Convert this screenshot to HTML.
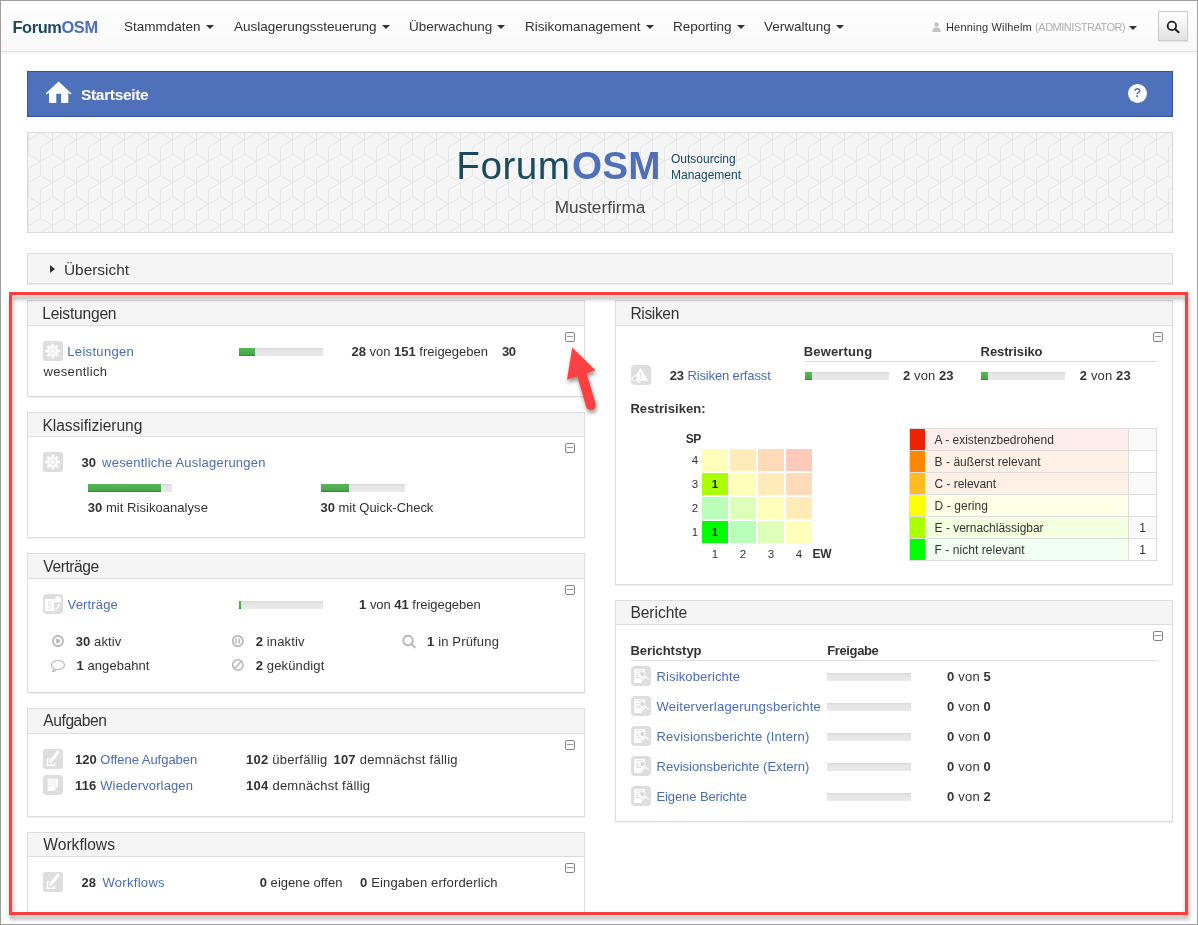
<!DOCTYPE html>
<html lang="de">
<head>
<meta charset="utf-8">
<title>ForumOSM - Startseite</title>
<style>
*{box-sizing:border-box;margin:0;padding:0}
html,body{width:1198px;height:925px;overflow:hidden;background:#fff}
#root{position:absolute;left:0;top:0;width:1198px;height:925px;will-change:transform}
body{position:relative;font-family:"Liberation Sans",sans-serif;font-size:13px;color:#333;line-height:1}
.abs,.t,.a,.h{position:absolute;white-space:nowrap}
.t{font-size:13px;line-height:16px;color:#333}
.a{font-size:13px;line-height:16px;color:#4a6cb8}
.h{font-size:15.6px;line-height:20px;color:#333}
.b,b{font-weight:bold}
.lnk{color:#4a6cb8}
#frame0{position:absolute;left:0;top:0;width:1198px;height:925px;border:1px solid #9f9f9f;z-index:50}
#nav{position:absolute;left:1px;top:1px;width:1196px;height:51px;background:linear-gradient(#fff,#f8f8f8);border-bottom:1px solid #e2e2e2;box-shadow:0 1px 5px rgba(0,0,0,.085)}
.nv{position:absolute;top:17.5px;font-size:13.5px;line-height:16px;color:#333;white-space:nowrap}
.caret{display:inline-block;width:0;height:0;border-left:4px solid transparent;border-right:4px solid transparent;border-top:4px solid #333;vertical-align:middle;margin-left:5px}
#hdr{position:absolute;left:27px;top:71px;width:1146px;height:46px;background:#4f70ba;border:1px solid #34519b}
#banner{position:absolute;left:27px;top:132px;width:1146px;height:101px;background:#f5f5f5;border:1px solid #dcdcdc;overflow:hidden}
#ueb{position:absolute;left:27px;top:253px;width:1146px;height:31px;background:#f5f5f5;border:1px solid #ddd;box-shadow:0 1px 1px rgba(0,0,0,.08)}
.panel{position:absolute;background:#fff;border:1px solid #ddd;box-shadow:0 1px 1px rgba(0,0,0,.06)}
.ph{position:absolute;background:#f5f5f5;border-bottom:1px solid #ddd}
.bar{position:absolute;height:8px;background:linear-gradient(#d8d8d8 0,#e5e5e5 2px,#e9e9e9 100%)}
.bar i{position:absolute;left:0;top:0;bottom:0;background:linear-gradient(#5bb75b 0,#47a447 85%,#2f8c2f 88%,#2f8c2f 100%);display:block}
.ico{position:absolute;width:20px;height:20px;border-radius:3.5px;background:#dedede;overflow:hidden}
.ico svg{position:absolute;left:0;top:0}
.mn{position:absolute;width:10px;height:10px;border:1px solid #858585;border-radius:2px;background:#fff}
.mn:after{content:"";position:absolute;left:1px;right:1px;top:3px;height:1.2px;background:#999}
.cell{position:absolute;width:26px;height:22px;font-size:11.5px;font-weight:bold;line-height:22px;text-align:center;color:#222}
.lg{position:absolute;font-size:12px;line-height:21px;color:#333;white-space:nowrap}
.hr{position:absolute;height:1px;background:#ddd}
</style>
</head>
<body>
<div id="root">
<div id="nav">
<div class="abs" style="left:11.4px;top:16px;font-size:16.4px;line-height:20px;font-weight:bold;color:#1b4a5c;letter-spacing:-0.38px">Forum<span style="color:#4f6fba">OSM</span></div>
<div class="nv" style="left:123px">Stammdaten<span class="caret"></span></div>
<div class="nv" style="left:233px">Auslagerungssteuerung<span class="caret"></span></div>
<div class="nv" style="left:408px">Überwachung<span class="caret"></span></div>
<div class="nv" style="left:524px">Risikomanagement<span class="caret"></span></div>
<div class="nv" style="left:672px">Reporting<span class="caret"></span></div>
<div class="nv" style="left:763px">Verwaltung<span class="caret"></span></div>
<svg class="abs" style="left:931px;top:21px" width="9" height="10" viewBox="0 0 9 10"><circle cx="4.5" cy="2.6" r="2.3" fill="#c4c4c4"/><path d="M0.3 10 C0.3 6.5 2 5.4 4.5 5.4 C7 5.4 8.7 6.5 8.7 10 Z" fill="#c4c4c4"/></svg>
<div class="abs" style="left:945px;top:18px;font-size:11px;line-height:16px;color:#333;letter-spacing:0.18px">Henning Wilhelm <span style="color:#b0b0b0;letter-spacing:-0.48px">(ADMINISTRATOR)</span><span class="caret" style="margin-left:4px"></span></div>
<div class="abs" style="left:1157px;top:10px;width:30px;height:30px;border:1px solid #ccc;background:linear-gradient(#fff,#e2e2e2);box-shadow:0 1px 1px rgba(0,0,0,.08)"><svg style="position:absolute;left:7px;top:8px" width="14" height="14" viewBox="0 0 14 14"><circle cx="5.9" cy="5.9" r="4.2" fill="none" stroke="#222" stroke-width="1.8"/><path d="M9 9 L12.6 12.2" stroke="#222" stroke-width="2" stroke-linecap="round"/></svg></div>
</div>
<div id="hdr">
<svg class="abs" style="left:17px;top:9px" width="28" height="23" viewBox="45 81 28 23"><path d="M58.6 81.5 L45.6 93.6 L46.6 94.6 L49 92.6 V103.1 H56.3 V93.8 H61.1 V103.1 H68.3 V92.6 L70.6 94.6 L71.6 93.6 Z" fill="#fff"/></svg>
<div class="abs" style="left:53px;top:14px;font-size:15.5px;line-height:18px;font-weight:bold;color:#fff;letter-spacing:-0.33px">Startseite</div>
<div class="abs" style="left:1100px;top:12px;width:19px;height:19px;border-radius:9.5px;background:#fff;color:#4f70ba;font-size:12px;font-weight:bold;line-height:19px;text-align:center">?</div>
</div>
<div id="banner">
<svg class="abs" style="left:0;top:0" width="1146" height="101"><defs><pattern id="cub" width="24" height="171" patternUnits="userSpaceOnUse" x="12" y="-36"><path d="M12.50 -42.50 L0.50 -49.50 M12.50 -42.50 L24.50 -49.50 M12.50 -56.50 L12.50 -28.10 M12.50 -42.50 L0.50 -35.50 M0.50 -21.12 L-11.50 -28.12 M0.50 -21.12 L12.50 -28.12 M0.50 -35.12 L0.50 -6.72 M0.50 -21.12 L-11.50 -14.12 M24.50 -21.12 L12.50 -28.12 M24.50 -21.12 L36.50 -28.12 M24.50 -35.12 L24.50 -6.72 M24.50 -21.12 L12.50 -14.12 M12.50 0.25 L0.50 -6.75 M12.50 0.25 L24.50 -6.75 M12.50 -13.75 L12.50 14.65 M12.50 0.25 L0.50 7.25 M0.50 21.62 L-11.50 14.62 M0.50 21.62 L12.50 14.62 M0.50 7.62 L0.50 36.02 M0.50 21.62 L-11.50 28.62 M24.50 21.62 L12.50 14.62 M24.50 21.62 L36.50 14.62 M24.50 7.62 L24.50 36.02 M24.50 21.62 L12.50 28.62 M12.50 43.00 L0.50 36.00 M12.50 43.00 L24.50 36.00 M12.50 29.00 L12.50 57.40 M12.50 43.00 L0.50 50.00 M0.50 64.38 L-11.50 57.38 M0.50 64.38 L12.50 57.38 M0.50 50.38 L0.50 78.78 M0.50 64.38 L-11.50 71.38 M24.50 64.38 L12.50 57.38 M24.50 64.38 L36.50 57.38 M24.50 50.38 L24.50 78.78 M24.50 64.38 L12.50 71.38 M12.50 85.75 L0.50 78.75 M12.50 85.75 L24.50 78.75 M12.50 71.75 L12.50 100.15 M12.50 85.75 L0.50 92.75 M0.50 107.12 L-11.50 100.12 M0.50 107.12 L12.50 100.12 M0.50 93.12 L0.50 121.53 M0.50 107.12 L-11.50 114.12 M24.50 107.12 L12.50 100.12 M24.50 107.12 L36.50 100.12 M24.50 93.12 L24.50 121.53 M24.50 107.12 L12.50 114.12 M12.50 128.50 L0.50 121.50 M12.50 128.50 L24.50 121.50 M12.50 114.50 L12.50 142.90 M12.50 128.50 L0.50 135.50 M0.50 149.88 L-11.50 142.88 M0.50 149.88 L12.50 142.88 M0.50 135.88 L0.50 164.28 M0.50 149.88 L-11.50 156.88 M24.50 149.88 L12.50 142.88 M24.50 149.88 L36.50 142.88 M24.50 135.88 L24.50 164.28 M24.50 149.88 L12.50 156.88 M12.50 171.25 L0.50 164.25 M12.50 171.25 L24.50 164.25 M12.50 157.25 L12.50 185.65 M12.50 171.25 L0.50 178.25 M0.50 192.62 L-11.50 185.62 M0.50 192.62 L12.50 185.62 M0.50 178.62 L0.50 207.03 M0.50 192.62 L-11.50 199.62 M24.50 192.62 L12.50 185.62 M24.50 192.62 L36.50 185.62 M24.50 178.62 L24.50 207.03 M24.50 192.62 L12.50 199.62 M12.50 214.00 L0.50 207.00 M12.50 214.00 L24.50 207.00 M12.50 200.00 L12.50 228.40 M12.50 214.00 L0.50 221.00 M0.50 235.38 L-11.50 228.38 M0.50 235.38 L12.50 228.38 M0.50 221.38 L0.50 249.78 M0.50 235.38 L-11.50 242.38 M24.50 235.38 L12.50 228.38 M24.50 235.38 L36.50 228.38 M24.50 221.38 L24.50 249.78 M24.50 235.38 L12.50 242.38" fill="none" stroke="#e4e6e8" stroke-width="1"/></pattern></defs><rect width="1146" height="101" fill="url(#cub)"/></svg>
<div id="logo" class="abs" style="left:428.3px;top:8.3px;font-size:38.7px;line-height:50px;color:#1b4a5c;letter-spacing:0.5px">Forum<b id="osm" style="color:#4f6fba;letter-spacing:0.2px;margin-left:1.4px">OSM</b></div>
<div class="abs" style="left:643px;top:19px;font-size:12px;line-height:15.5px;color:#1b4a5c">Outsourcing<br>Management</div>
<div class="abs" style="left:0;width:1144px;top:64.4px;text-align:center;font-size:17.2px;line-height:20px;color:#444">Musterfirma</div>
</div>
<div id="ueb">
<div class="abs" style="left:22px;top:11px;width:0;height:0;border-top:4.5px solid transparent;border-bottom:4.5px solid transparent;border-left:5.5px solid #333"></div>
<div class="abs" style="left:36px;top:7px;font-size:15.4px;line-height:18px;color:#333">Übersicht</div>
</div>
<div class="panel" style="left:27px;top:300px;width:558px;height:97px;"></div>
<div class="ph" style="left:28px;top:301px;width:556px;height:25px"></div>
<div id="x1" class="h" style="left:42.2px;top:304px;letter-spacing:-0.22px">Leistungen</div>
<div class="mn" style="left:565px;top:332px"></div>
<div class="ico" style="left:43px;top:341px;border-radius:2.5px"><svg width="20" height="20" viewBox="0 0 20 20"><path d="M8.46 4.85 L8.43 2.71 L10.97 2.71 L10.94 4.85 L12.47 5.48 L13.96 3.95 L15.75 5.74 L14.22 7.23 L14.85 8.76 L16.99 8.73 L16.99 11.27 L14.85 11.24 L14.22 12.77 L15.75 14.26 L13.96 16.05 L12.47 14.52 L10.94 15.15 L10.97 17.29 L8.43 17.29 L8.46 15.15 L6.93 14.52 L5.44 16.05 L3.65 14.26 L5.18 12.77 L4.55 11.24 L2.41 11.27 L2.41 8.73 L4.55 8.76 L5.18 7.23 L3.65 5.74 L5.44 3.95 L6.93 5.48 Z" fill="#fff"/><circle cx="9.7" cy="10" r="2.7" fill="#fff" stroke="#dcdcdc" stroke-width="0.9"/></svg></div>
<div id="x2" class="a" style="left:67.3px;top:344px;letter-spacing:0.32px;">Leistungen</div>
<div id="x3" class="t" style="left:43.5px;top:364px;letter-spacing:0.32px;">wesentlich</div>
<div class="bar" style="left:239px;top:348px;width:84px"><i style="width:16px"></i></div>
<div id="x4" class="t" style="left:351.5px;top:344px;letter-spacing:-0.01px;"><b>28</b> von <b>151</b> freigegeben</div>
<div id="x5" class="t" style="left:502.1px;top:344px;letter-spacing:-0.45px;"><b>30</b></div>
<div class="panel" style="left:27px;top:412px;width:558px;height:126px;"></div>
<div class="ph" style="left:28px;top:413px;width:556px;height:24px"></div>
<div id="x6" class="h" style="left:42.4px;top:416px;letter-spacing:-0.04px">Klassifizierung</div>
<div class="mn" style="left:565px;top:443px"></div>
<div class="ico" style="left:43px;top:452px;border-radius:2.5px"><svg width="20" height="20" viewBox="0 0 20 20"><path d="M8.46 4.85 L8.43 2.71 L10.97 2.71 L10.94 4.85 L12.47 5.48 L13.96 3.95 L15.75 5.74 L14.22 7.23 L14.85 8.76 L16.99 8.73 L16.99 11.27 L14.85 11.24 L14.22 12.77 L15.75 14.26 L13.96 16.05 L12.47 14.52 L10.94 15.15 L10.97 17.29 L8.43 17.29 L8.46 15.15 L6.93 14.52 L5.44 16.05 L3.65 14.26 L5.18 12.77 L4.55 11.24 L2.41 11.27 L2.41 8.73 L4.55 8.76 L5.18 7.23 L3.65 5.74 L5.44 3.95 L6.93 5.48 Z" fill="#fff"/><circle cx="9.7" cy="10" r="2.7" fill="#fff" stroke="#dcdcdc" stroke-width="0.9"/></svg></div>
<div id="x7" class="t" style="left:81.6px;top:455px;letter-spacing:-0.09px;"><b>30</b></div>
<div id="x8" class="a" style="left:102.1px;top:455px;letter-spacing:0.21px;">wesentliche Auslagerungen</div>
<div class="bar" style="left:88px;top:484px;width:84px"><i style="width:73px"></i></div>
<div id="x9" class="t" style="left:87.7px;top:500px;letter-spacing:0.05px;"><b>30</b> mit Risikoanalyse</div>
<div class="bar" style="left:321px;top:484px;width:84px"><i style="width:28px"></i></div>
<div id="x10" class="t" style="left:320.6px;top:500px;letter-spacing:-0.04px;"><b>30</b> mit Quick-Check</div>
<div class="panel" style="left:27px;top:553px;width:558px;height:140px;"></div>
<div class="ph" style="left:28px;top:554px;width:556px;height:25px"></div>
<div id="x11" class="h" style="left:43.3px;top:557px;letter-spacing:-0.44px">Verträge</div>
<div class="mn" style="left:565px;top:585px"></div>
<div class="ico" style="left:43px;top:594px;border-radius:4px"><svg width="20" height="20" viewBox="0 0 20 20"><rect x="1.9" y="5" width="9.3" height="12" fill="#fff"/><text x="3.9" y="13.8" font-family="Liberation Sans, sans-serif" font-size="9" fill="#dcdcdc">§</text><path d="M11.7 8.3 V4.6 L14.9 1.8 L18 4.6 V8.3 Z" fill="#fff"/><path d="M12.6 15.6 C15 14.6 15.6 12.6 15.7 10.8" fill="none" stroke="#fff" stroke-width="1.3"/><path d="M14 11.4 L15.9 9.6 L17.3 11.9 Z" fill="#fff"/></svg></div>
<div id="x12" class="a" style="left:67.6px;top:597px;letter-spacing:0.15px;">Verträge</div>
<div class="bar" style="left:239px;top:601px;width:84px"><i style="width:2px"></i></div>
<div id="x13" class="t" style="left:359.1px;top:597px;letter-spacing:-0.03px;"><b>1</b> von <b>41</b> freigegeben</div>
<svg class="abs" style="left:52px;top:636px;overflow:visible" width="14" height="13" viewBox="0 0 14 13"><circle cx="6" cy="5" r="5.1" fill="none" stroke="#b6b6b6" stroke-width="1.7"/><path d="M4.3 2.1 L8.9 5 L4.3 7.9 Z" fill="#b6b6b6"/></svg>
<div id="x14" class="t" style="left:75.8px;top:634px;letter-spacing:0.08px;"><b>30</b> aktiv</div>
<svg class="abs" style="left:232px;top:636px;overflow:visible" width="14" height="13" viewBox="0 0 14 13"><circle cx="5.8" cy="5" r="5.1" fill="none" stroke="#b6b6b6" stroke-width="1.7"/><path d="M4.15 2.5 V7.5 M7.2 2.5 V7.5" stroke="#b6b6b6" stroke-width="1.4"/></svg>
<div id="x15" class="t" style="left:255.7px;top:634px;letter-spacing:0.13px;"><b>2</b> inaktiv</div>
<svg class="abs" style="left:403px;top:636px;overflow:visible" width="14" height="13" viewBox="0 0 14 13"><circle cx="5" cy="4.5" r="4.7" fill="none" stroke="#b6b6b6" stroke-width="1.9"/><path d="M8.6 8.1 L11.8 11.2" stroke="#b6b6b6" stroke-width="2" stroke-linecap="round"/></svg>
<div id="x16" class="t" style="left:427.0px;top:634px;letter-spacing:0.16px;"><b>1</b> in Prüfung</div>
<svg class="abs" style="left:51px;top:660px;overflow:visible" width="14" height="13" viewBox="0 0 14 13"><ellipse cx="7" cy="5" rx="6.5" ry="4.5" fill="none" stroke="#b6b6b6" stroke-width="1.1"/><path d="M3.3 8.8 C3.2 10.2 2.4 11 1.2 11.6 C3.2 11.5 4.6 10.7 5.4 9.4" fill="#fff" stroke="#b6b6b6" stroke-width="1.1"/></svg>
<div id="x17" class="t" style="left:76.6px;top:658px;letter-spacing:0.05px;"><b>1</b> angebahnt</div>
<svg class="abs" style="left:232px;top:660px;overflow:visible" width="14" height="13" viewBox="0 0 14 13"><circle cx="5.8" cy="5" r="5.2" fill="none" stroke="#b6b6b6" stroke-width="1.5"/><path d="M2.2 8.7 L9.4 1.3" stroke="#b6b6b6" stroke-width="1.5"/></svg>
<div id="x18" class="t" style="left:255.7px;top:658px;letter-spacing:0.14px;"><b>2</b> gekündigt</div>
<div class="panel" style="left:27px;top:708px;width:558px;height:109px;"></div>
<div class="ph" style="left:28px;top:709px;width:556px;height:25px"></div>
<div id="x19" class="h" style="left:43.3px;top:711px;letter-spacing:-0.44px">Aufgaben</div>
<div class="mn" style="left:565px;top:740px"></div>
<div class="ico" style="left:43px;top:749px;border-radius:2.5px"><svg width="20" height="20" viewBox="0 0 20 20"><path d="M14.5 1.2 L17 3.2 L9.3 13 L6.5 14.2 L6.8 11 Z" fill="#fff"/><path d="M6.2 9.6 H4.5 V16.3 H11.5 V14" fill="none" stroke="#fff" stroke-width="1.4"/></svg></div>
<div class="ico" style="left:43px;top:775px;border-radius:4px"><svg width="20" height="20" viewBox="0 0 20 20"><path d="M4.7 3.8 H15 V12 L11.2 15.9 H4.7 Z" fill="#fff"/><path d="M11.4 15.7 V12.2 H14.8 Z" fill="#f4f4f4" stroke="#e4e4e4" stroke-width="0.5"/><path d="M6.2 5.4 H13 M6.2 7.8 H13 M6.2 10.3 H13" stroke="#e6e8ee" stroke-width="0.9"/></svg></div>
<div id="x20" class="t" style="left:75.1px;top:752px;letter-spacing:-0.03px;"><b>120</b> <span class="lnk">Offene Aufgaben</span></div>
<div id="x21" class="t" style="left:75.1px;top:778px;letter-spacing:0.13px;"><b>116</b> <span class="lnk">Wiedervorlagen</span></div>
<div id="x22" class="t" style="left:246.1px;top:752px;letter-spacing:0.24px;"><b>102</b> überfällig</div>
<div id="x23" class="t" style="left:333.4px;top:752px;letter-spacing:0.26px;"><b>107</b> demnächst fällig</div>
<div id="x24" class="t" style="left:246.1px;top:778px;letter-spacing:0.25px;"><b>104</b> demnächst fällig</div>
<div class="panel" style="left:27px;top:832px;width:558px;height:82px;border-bottom:none;"></div>
<div class="ph" style="left:28px;top:833px;width:556px;height:24px"></div>
<div id="x25" class="h" style="left:43.3px;top:835px;letter-spacing:0.00px">Workflows</div>
<div class="mn" style="left:565px;top:863px"></div>
<div class="ico" style="left:43px;top:872px;border-radius:2.5px"><svg width="20" height="20" viewBox="0 0 20 20"><path d="M14.5 1.2 L17 3.2 L9.3 13 L6.5 14.2 L6.8 11 Z" fill="#fff"/><path d="M6.2 9.6 H4.5 V16.3 H11.5 V14" fill="none" stroke="#fff" stroke-width="1.4"/></svg></div>
<div id="x26" class="t" style="left:81.6px;top:875px;letter-spacing:-0.09px;"><b>28</b></div>
<div id="x27" class="a" style="left:102.4px;top:875px;letter-spacing:0.31px;">Workflows</div>
<div id="x28" class="t" style="left:259.7px;top:875px;letter-spacing:0.04px;"><b>0</b> eigene offen</div>
<div id="x29" class="t" style="left:360.1px;top:875px;letter-spacing:0.14px;"><b>0</b> Eingaben erforderlich</div>
<div class="panel" style="left:615px;top:300px;width:558px;height:285px;"></div>
<div class="ph" style="left:616px;top:301px;width:556px;height:25px"></div>
<div id="x30" class="h" style="left:630.4px;top:304px;letter-spacing:-0.36px">Risiken</div>
<div class="mn" style="left:1153px;top:332px"></div>
<div class="ico" style="left:631px;top:365px;border-radius:4px"><svg width="20" height="20" viewBox="0 0 20 20"><path d="M9.5 3 L17.1 15.8 H1.9 Z" fill="#fff"/><rect x="8.8" y="7.2" width="1.5" height="4.6" fill="#dedede"/><rect x="8.8" y="13.1" width="1.5" height="1" fill="#dedede"/><circle cx="3.8" cy="13.5" r="2.6" fill="#dedede" stroke="#fff" stroke-width="0.9"/><path d="M5.9 15.6 L9.4 18" stroke="#fff" stroke-width="1.2"/></svg></div>
<div id="x31" class="t" style="left:669.7px;top:368px;letter-spacing:-0.13px;"><b>23</b> <span class="lnk">Risiken erfasst</span></div>
<div id="x32" class="t b" style="left:803.8px;top:344px;letter-spacing:0.14px;">Bewertung</div>
<div id="x33" class="t b" style="left:980.6px;top:344px;letter-spacing:-0.10px;">Restrisiko</div>
<div class="hr" style="left:805px;top:361px;width:352px"></div>
<div class="bar" style="left:805px;top:372px;width:84px"><i style="width:7px"></i></div>
<div id="x34" class="t" style="left:903.1px;top:368px;letter-spacing:0.07px;"><b>2</b> von <b>23</b></div>
<div class="bar" style="left:981px;top:372px;width:84px"><i style="width:7px"></i></div>
<div id="x35" class="t" style="left:1079.8px;top:368px;letter-spacing:0.13px;"><b>2</b> von <b>23</b></div>
<div id="x36" class="t b" style="left:630.4px;top:401px;letter-spacing:0.08px;">Restrisiken:</div>
<div id="x37" class="t b" style="left:685.7px;top:431px;font-size:12px;letter-spacing:-0.45px;">SP</div>
<div id="x38" class="t" style="left:690.0px;top:452px;width:10px;text-align:center;font-size:11.5px;">4</div>
<div class="cell" style="left:702px;top:449px;background:#ffffb9"></div>
<div class="cell" style="left:730px;top:449px;background:#ffecb9"></div>
<div class="cell" style="left:758px;top:449px;background:#ffdbb9"></div>
<div class="cell" style="left:786px;top:449px;background:#ffcab9"></div>
<div id="x39" class="t" style="left:690.0px;top:476px;width:10px;text-align:center;font-size:11.5px;">3</div>
<div class="cell" style="left:702px;top:473px;background:#aaff00">1</div>
<div class="cell" style="left:730px;top:473px;background:#ffffb9"></div>
<div class="cell" style="left:758px;top:473px;background:#ffecb9"></div>
<div class="cell" style="left:786px;top:473px;background:#ffdbb9"></div>
<div id="x40" class="t" style="left:690.0px;top:500px;width:10px;text-align:center;font-size:11.5px;">2</div>
<div class="cell" style="left:702px;top:497px;background:#b9ffb9"></div>
<div class="cell" style="left:730px;top:497px;background:#deffb9"></div>
<div class="cell" style="left:758px;top:497px;background:#ffffb9"></div>
<div class="cell" style="left:786px;top:497px;background:#ffecb9"></div>
<div id="x41" class="t" style="left:690.0px;top:524px;width:10px;text-align:center;font-size:11.5px;">1</div>
<div class="cell" style="left:702px;top:521px;background:#00ff00">1</div>
<div class="cell" style="left:730px;top:521px;background:#b9ffb9"></div>
<div class="cell" style="left:758px;top:521px;background:#deffb9"></div>
<div class="cell" style="left:786px;top:521px;background:#ffffb9"></div>
<div id="x42" class="t" style="left:702.0px;top:546px;width:26px;text-align:center;font-size:11.5px;">1</div>
<div id="x43" class="t" style="left:730.0px;top:546px;width:26px;text-align:center;font-size:11.5px;">2</div>
<div id="x44" class="t" style="left:758.0px;top:546px;width:26px;text-align:center;font-size:11.5px;">3</div>
<div id="x45" class="t" style="left:786.0px;top:546px;width:26px;text-align:center;font-size:11.5px;">4</div>
<div id="x46" class="t b" style="left:812.6px;top:546px;font-size:12px;letter-spacing:-0.45px;">EW</div>
<div class="abs" style="left:909px;top:428px;width:248px;height:133px;background:#ddd"></div>
<div class="abs" style="left:910px;top:429px;width:15px;height:21px;background:#ee2200"></div>
<div class="abs" style="left:925px;top:429px;width:203px;height:21px;background:#ffecec"></div>
<div class="abs" style="left:1129px;top:429px;width:27px;height:21px;background:#f9f9f9"></div>
<div id="x47" class="t" style="left:934.6px;top:431.5px;font-size:12px;letter-spacing:-0.01px;">A - existenzbedrohend</div>
<div class="abs" style="left:910px;top:451px;width:15px;height:21px;background:#ff8800"></div>
<div class="abs" style="left:925px;top:451px;width:203px;height:21px;background:#fff0e6"></div>
<div class="abs" style="left:1129px;top:451px;width:27px;height:21px;background:#fff"></div>
<div id="x48" class="t" style="left:934.6px;top:453.5px;font-size:12px;letter-spacing:0.03px;">B - äußerst relevant</div>
<div class="abs" style="left:910px;top:473px;width:15px;height:21px;background:#ffbb22"></div>
<div class="abs" style="left:925px;top:473px;width:203px;height:21px;background:#fff0e6"></div>
<div class="abs" style="left:1129px;top:473px;width:27px;height:21px;background:#f9f9f9"></div>
<div id="x49" class="t" style="left:934.6px;top:475.5px;font-size:12px;letter-spacing:-0.05px;">C - relevant</div>
<div class="abs" style="left:910px;top:495px;width:15px;height:21px;background:#ffff00"></div>
<div class="abs" style="left:925px;top:495px;width:203px;height:21px;background:#ffffe6"></div>
<div class="abs" style="left:1129px;top:495px;width:27px;height:21px;background:#fff"></div>
<div id="x50" class="t" style="left:934.6px;top:497.5px;font-size:12px;letter-spacing:0.06px;">D - gering</div>
<div class="abs" style="left:910px;top:517px;width:15px;height:21px;background:#aaff00"></div>
<div class="abs" style="left:925px;top:517px;width:203px;height:21px;background:#f4ffe0"></div>
<div class="abs" style="left:1129px;top:517px;width:27px;height:21px;background:#f9f9f9"></div>
<div id="x51" class="t" style="left:934.6px;top:519.5px;font-size:12px;letter-spacing:-0.02px;">E - vernachlässigbar</div>
<div id="x52" class="t" style="left:1129.0px;top:519.5px;width:27px;text-align:center;font-size:12px;">1</div>
<div class="abs" style="left:910px;top:539px;width:15px;height:21px;background:#00ff00"></div>
<div class="abs" style="left:925px;top:539px;width:203px;height:21px;background:#f0fff0"></div>
<div class="abs" style="left:1129px;top:539px;width:27px;height:21px;background:#fff"></div>
<div id="x53" class="t" style="left:934.6px;top:541.5px;font-size:12px;letter-spacing:0.04px;">F - nicht relevant</div>
<div id="x54" class="t" style="left:1129.0px;top:541.5px;width:27px;text-align:center;font-size:12px;">1</div>
<div class="panel" style="left:615px;top:600px;width:558px;height:222px;"></div>
<div class="ph" style="left:616px;top:601px;width:556px;height:24px"></div>
<div id="x55" class="h" style="left:630.4px;top:603px;letter-spacing:-0.05px">Berichte</div>
<div class="mn" style="left:1153px;top:631px"></div>
<div id="x56" class="t b" style="left:630.4px;top:643px;letter-spacing:-0.04px;">Berichtstyp</div>
<div id="x57" class="t b" style="left:827.2px;top:643px;letter-spacing:-0.36px;">Freigabe</div>
<div class="hr" style="left:631px;top:660px;width:526px"></div>
<div class="ico" style="left:631px;top:666px;border-radius:4px"><svg width="20" height="20" viewBox="0 0 20 20"><path d="M3.2 3 H13.9 V13 L10.2 16.9 H3.2 Z" fill="#fff"/><path d="M10.4 16.7 V13.2 H13.7 Z" fill="#f2f2f2" stroke="#e2e2e2" stroke-width="0.5"/><path d="M5 4.7 H12.5 M5 7.5 H8 M5 9.5 H8 M5 11.5 H10" stroke="#dcdde2" stroke-width="0.9"/><circle cx="11.4" cy="8" r="2.7" fill="#d9d9d9" stroke="#fff" stroke-width="1"/><path d="M13.7 10.3 L17.6 13.4" stroke="#fff" stroke-width="1.3"/></svg></div>
<div id="x58" class="a" style="left:656.5px;top:669px;letter-spacing:0.14px;">Risikoberichte</div>
<div class="bar" style="left:827px;top:673px;width:84px"></div>
<div id="x59" class="t" style="left:947.1px;top:669px;letter-spacing:0.18px;"><b>0</b> von <b>5</b></div>
<div class="ico" style="left:631px;top:696px;border-radius:4px"><svg width="20" height="20" viewBox="0 0 20 20"><path d="M3.2 3 H13.9 V13 L10.2 16.9 H3.2 Z" fill="#fff"/><path d="M10.4 16.7 V13.2 H13.7 Z" fill="#f2f2f2" stroke="#e2e2e2" stroke-width="0.5"/><path d="M5 4.7 H12.5 M5 7.5 H8 M5 9.5 H8 M5 11.5 H10" stroke="#dcdde2" stroke-width="0.9"/><circle cx="11.4" cy="8" r="2.7" fill="#d9d9d9" stroke="#fff" stroke-width="1"/><path d="M13.7 10.3 L17.6 13.4" stroke="#fff" stroke-width="1.3"/></svg></div>
<div id="x60" class="a" style="left:656.5px;top:699px;letter-spacing:0.22px;">Weiterverlagerungsberichte</div>
<div class="bar" style="left:827px;top:703px;width:84px"></div>
<div id="x61" class="t" style="left:947.1px;top:699px;letter-spacing:0.18px;"><b>0</b> von <b>0</b></div>
<div class="ico" style="left:631px;top:726px;border-radius:4px"><svg width="20" height="20" viewBox="0 0 20 20"><path d="M3.2 3 H13.9 V13 L10.2 16.9 H3.2 Z" fill="#fff"/><path d="M10.4 16.7 V13.2 H13.7 Z" fill="#f2f2f2" stroke="#e2e2e2" stroke-width="0.5"/><path d="M5 4.7 H12.5 M5 7.5 H8 M5 9.5 H8 M5 11.5 H10" stroke="#dcdde2" stroke-width="0.9"/><circle cx="11.4" cy="8" r="2.7" fill="#d9d9d9" stroke="#fff" stroke-width="1"/><path d="M13.7 10.3 L17.6 13.4" stroke="#fff" stroke-width="1.3"/></svg></div>
<div id="x62" class="a" style="left:656.5px;top:729px;letter-spacing:0.19px;">Revisionsberichte (Intern)</div>
<div class="bar" style="left:827px;top:733px;width:84px"></div>
<div id="x63" class="t" style="left:947.1px;top:729px;letter-spacing:0.18px;"><b>0</b> von <b>0</b></div>
<div class="ico" style="left:631px;top:756px;border-radius:4px"><svg width="20" height="20" viewBox="0 0 20 20"><path d="M3.2 3 H13.9 V13 L10.2 16.9 H3.2 Z" fill="#fff"/><path d="M10.4 16.7 V13.2 H13.7 Z" fill="#f2f2f2" stroke="#e2e2e2" stroke-width="0.5"/><path d="M5 4.7 H12.5 M5 7.5 H8 M5 9.5 H8 M5 11.5 H10" stroke="#dcdde2" stroke-width="0.9"/><circle cx="11.4" cy="8" r="2.7" fill="#d9d9d9" stroke="#fff" stroke-width="1"/><path d="M13.7 10.3 L17.6 13.4" stroke="#fff" stroke-width="1.3"/></svg></div>
<div id="x64" class="a" style="left:656.5px;top:759px;letter-spacing:0.02px;">Revisionsberichte (Extern)</div>
<div class="bar" style="left:827px;top:763px;width:84px"></div>
<div id="x65" class="t" style="left:947.1px;top:759px;letter-spacing:0.18px;"><b>0</b> von <b>0</b></div>
<div class="ico" style="left:631px;top:786px;border-radius:4px"><svg width="20" height="20" viewBox="0 0 20 20"><path d="M3.2 3 H13.9 V13 L10.2 16.9 H3.2 Z" fill="#fff"/><path d="M10.4 16.7 V13.2 H13.7 Z" fill="#f2f2f2" stroke="#e2e2e2" stroke-width="0.5"/><path d="M5 4.7 H12.5 M5 7.5 H8 M5 9.5 H8 M5 11.5 H10" stroke="#dcdde2" stroke-width="0.9"/><circle cx="11.4" cy="8" r="2.7" fill="#d9d9d9" stroke="#fff" stroke-width="1"/><path d="M13.7 10.3 L17.6 13.4" stroke="#fff" stroke-width="1.3"/></svg></div>
<div id="x66" class="a" style="left:656.5px;top:789px;letter-spacing:-0.10px;">Eigene Berichte</div>
<div class="bar" style="left:827px;top:793px;width:84px"></div>
<div id="x67" class="t" style="left:947.1px;top:789px;letter-spacing:0.18px;"><b>0</b> von <b>2</b></div>
<div class="abs" style="left:9px;top:292px;width:1179px;height:623px;border:3px solid #ff3d3d;filter:drop-shadow(1.5px 4px 2.2px rgba(0,0,0,.37));z-index:40"></div>
<svg class="abs" style="left:550px;top:335px;z-index:41;filter:drop-shadow(1px 3px 2px rgba(0,0,0,.45))" width="70" height="85" viewBox="550 335 70 85"><path d="M572.2 347.6 L595.4 370.3 L586.6 373.2 L595.5 403.8 A4.9 4.9 0 0 1 586.2 406.8 L577.3 376.3 L567 379.7 Z" fill="#ff4040"/></svg>
<div id="frame0"></div>
</div>
</body>
</html>
